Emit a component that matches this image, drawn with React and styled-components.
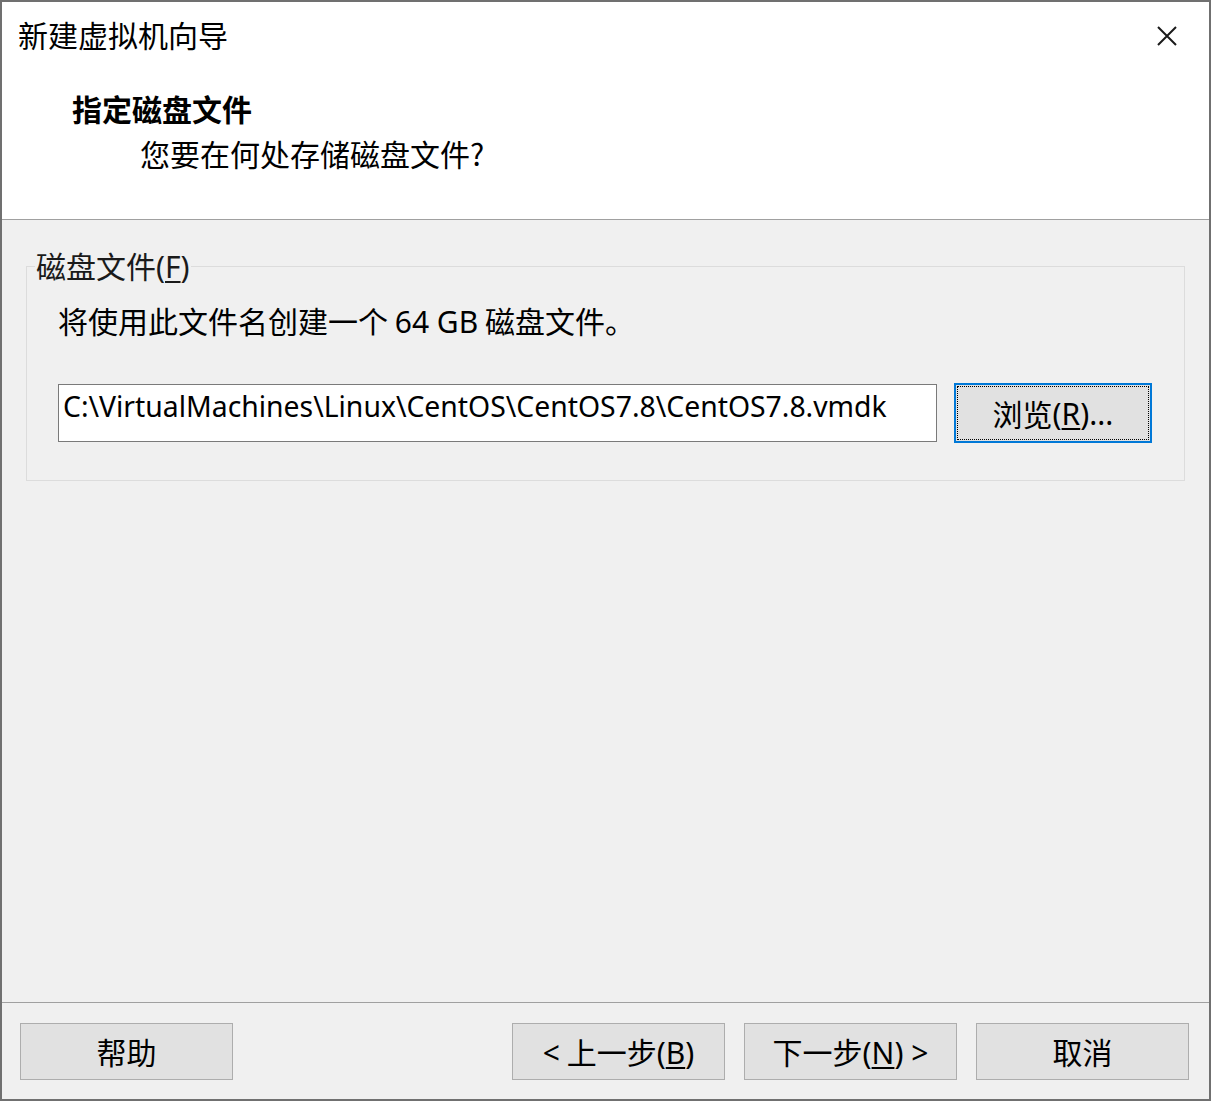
import React from 'react';
import styled, { createGlobalStyle } from 'styled-components';

const GlobalStyle = createGlobalStyle`
  html, body {
    margin: 0;
    padding: 0;
    background: #ffffff;
  }
  body {
    font-family: "Noto Sans", "Noto Sans CJK SC", sans-serif;
  }
`;

const CJK = `"Noto Sans CJK SC", "Noto Sans", sans-serif`;
const LATIN = `"Noto Sans", "Noto Sans CJK SC", sans-serif`;

export default function App() {
  return (
    <>
      <GlobalStyle />
      <Window>
        <Header>
          <TitleBar>
            <Title>新建虚拟机向导</Title>
            <CloseButton aria-label="关闭">
              <svg width="20" height="20" viewBox="0 0 20 20">
                <path d="M1 1 L19 19 M19 1 L1 19" stroke="#1a1a1a" strokeWidth="2" fill="none" />
              </svg>
            </CloseButton>
          </TitleBar>
          <StepTitle>指定磁盘文件</StepTitle>
          <StepSubtitle>您要在何处存储磁盘文件?</StepSubtitle>
        </Header>

        <Body>
          <GroupBox>
            <Legend>
              磁盘文件<Latin>(<Mnemonic>F</Mnemonic>)</Latin>
            </Legend>
            <GroupContent>
              <Info>
                将使用此文件名创建一个 <Latin>64 GB</Latin> 磁盘文件。
              </Info>
              <PathRow>
                <PathInput readOnly value="C:\VirtualMachines\Linux\CentOS\CentOS7.8\CentOS7.8.vmdk" />
                <BrowseButton type="button">
                  <FocusRect>
                    浏览<Latin>(<Mnemonic>R</Mnemonic>)...</Latin>
                  </FocusRect>
                </BrowseButton>
              </PathRow>
            </GroupContent>
          </GroupBox>
        </Body>

        <Footer>
          <DialogButton type="button">帮助</DialogButton>
          <Spacer />
          <DialogButton type="button">
            <Latin>&lt;</Latin> 上一步<Latin>(<Mnemonic>B</Mnemonic>)</Latin>
          </DialogButton>
          <DialogButton type="button">
            下一步<Latin>(<Mnemonic>N</Mnemonic>) &gt;</Latin>
          </DialogButton>
          <DialogButton type="button">取消</DialogButton>
        </Footer>
      </Window>
    </>
  );
}

const Window = styled.div`
  width: 1211px;
  height: 1101px;
  box-sizing: border-box;
  border: 2px solid #707070;
  display: flex;
  flex-direction: column;
  background: #f0f0f0;
  color: #000;
  font-family: ${CJK};
`;

const Header = styled.header`
  height: 218px;
  box-sizing: border-box;
  background: #ffffff;
  border-bottom: 1px solid #a0a0a0;
  padding: 12px 0 0 16px;
`;

const TitleBar = styled.div`
  display: flex;
  justify-content: space-between;
  align-items: flex-start;
`;

const Title = styled.h1`
  margin: 0;
  font-size: 30px;
  font-weight: 400;
  line-height: 40px;
`;

const CloseButton = styled.button`
  border: 0;
  background: transparent;
  padding: 0;
  margin: 12px 32px 0 0;
  width: 20px;
  height: 20px;
  display: flex;
`;

const StepTitle = styled.h2`
  margin: 34px 0 0 54px;
  font-size: 30px;
  font-weight: 700;
  line-height: 40px;
`;

const StepSubtitle = styled.p`
  margin: 5px 0 0 122px;
  font-size: 30px;
  line-height: 40px;
`;

const Body = styled.main`
  flex: 1;
  padding: 27px 24px 0 24px;
  border-bottom: 1px solid #a0a0a0;
`;

const GroupBox = styled.fieldset`
  margin: 0;
  padding: 0;
  border: 1px solid #dcdcdc;
  min-width: 0;
`;

const Legend = styled.legend`
  margin-left: 8px;
  padding: 0 1px;
  font-size: 30px;
  line-height: 36px;
  color: #1a1a1a;
`;

const GroupContent = styled.div`
  padding: 15px 31px 37px 31px;
`;

const Mnemonic = styled.span`
  text-decoration: underline;
  text-underline-offset: 3px;
  text-decoration-thickness: 2px;
`;

const Latin = styled.span`
  font-family: ${LATIN};
`;

const Info = styled.p`
  margin: 0;
  font-size: 30px;
  line-height: 40px;
`;

const PathRow = styled.div`
  display: flex;
  align-items: center;
  gap: 17px;
  margin-top: 41px;
`;

const PathInput = styled.input`
  width: 879px;
  height: 58px;
  box-sizing: border-box;
  border: 1px solid #7a7a7a;
  background: #ffffff;
  padding: 0 0 14px 4px;
  font-family: ${LATIN};
  font-size: 28.35px;
  color: #000;
  outline: none;
`;

const BrowseButton = styled.button`
  width: 198px;
  height: 60px;
  box-sizing: border-box;
  border: 2px solid #0078d7;
  background: #e1e1e1;
  padding: 1px;
  font-family: ${CJK};
  font-size: 30px;
  color: #000;
  display: flex;
`;

const FocusRect = styled.span`
  flex: 1;
  display: flex;
  align-items: center;
  justify-content: center;
  border: 1px dotted #000;
`;

const Footer = styled.footer`
  height: 96px;
  box-sizing: border-box;
  display: flex;
  align-items: center;
  gap: 19px;
  padding: 0 20px 0 18px;
`;

const Spacer = styled.div`
  flex: 1;
`;

const DialogButton = styled.button`
  width: 213px;
  height: 57px;
  box-sizing: border-box;
  border: 1px solid #adadad;
  background: #e1e1e1;
  font-family: ${CJK};
  font-size: 30px;
  color: #000;
  padding: 0;
`;
